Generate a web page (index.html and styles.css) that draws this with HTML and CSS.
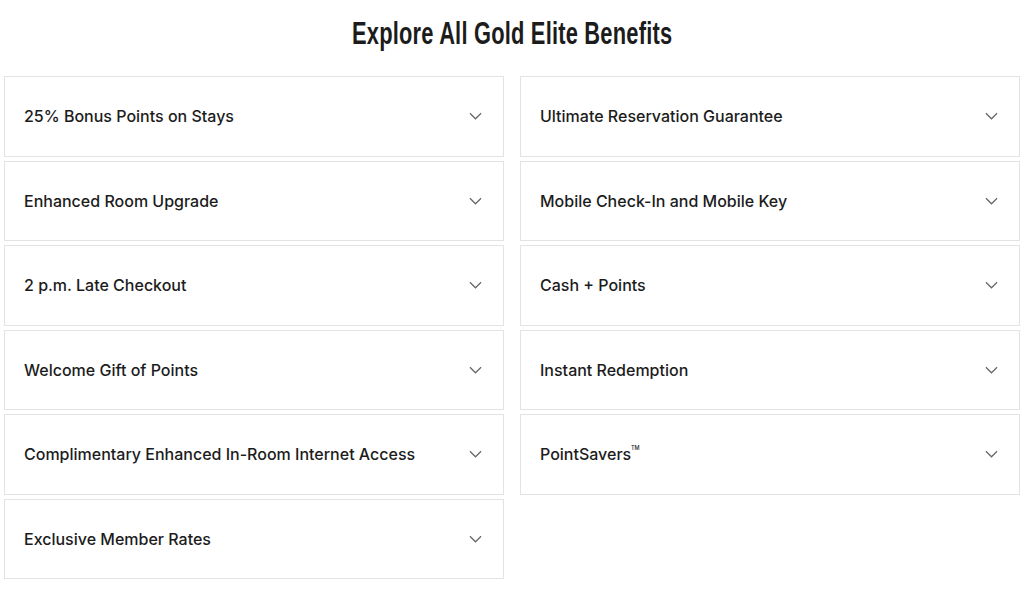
FILE: index.html
```html
<!DOCTYPE html>
<html lang="en">

<head>
    <meta charset="UTF-8">
    <meta name="viewport" content="width=device-width, initial-scale=1.0">
    <title>Gold Elite Benefits</title>
    <link rel="stylesheet" href="styles.css">
</head>

<body>
    <h1 class="title"><span>Explore All Gold Elite Benefits</span></h1>

    <div class="benefits">
        <div class="column">
            <div class="benefit"><span>25% Bonus Points on Stays</span><svg class="chevron" viewBox="0 0 14 8"><path d="M1 1l6 6 6-6"/></svg></div>
            <div class="benefit"><span>Enhanced Room Upgrade</span><svg class="chevron" viewBox="0 0 14 8"><path d="M1 1l6 6 6-6"/></svg></div>
            <div class="benefit"><span>2 p.m. Late Checkout</span><svg class="chevron" viewBox="0 0 14 8"><path d="M1 1l6 6 6-6"/></svg></div>
            <div class="benefit"><span>Welcome Gift of Points</span><svg class="chevron" viewBox="0 0 14 8"><path d="M1 1l6 6 6-6"/></svg></div>
            <div class="benefit"><span>Complimentary Enhanced In-Room Internet Access</span><svg class="chevron" viewBox="0 0 14 8"><path d="M1 1l6 6 6-6"/></svg></div>
            <div class="benefit"><span>Exclusive Member Rates</span><svg class="chevron" viewBox="0 0 14 8"><path d="M1 1l6 6 6-6"/></svg></div>
        </div>
        <div class="column">
            <div class="benefit"><span>Ultimate Reservation Guarantee</span><svg class="chevron" viewBox="0 0 14 8"><path d="M1 1l6 6 6-6"/></svg></div>
            <div class="benefit"><span>Mobile Check-In and Mobile Key</span><svg class="chevron" viewBox="0 0 14 8"><path d="M1 1l6 6 6-6"/></svg></div>
            <div class="benefit"><span>Cash + Points</span><svg class="chevron" viewBox="0 0 14 8"><path d="M1 1l6 6 6-6"/></svg></div>
            <div class="benefit"><span>Instant Redemption</span><svg class="chevron" viewBox="0 0 14 8"><path d="M1 1l6 6 6-6"/></svg></div>
            <div class="benefit"><span>PointSavers<span class="tm">TM</span></span><svg class="chevron" viewBox="0 0 14 8"><path d="M1 1l6 6 6-6"/></svg></div>
        </div>
    </div>
</body>

</html>
```

FILE: styles.css
```css
body {
    margin: 0;
    padding: 0 4px;
    background: #fff;
    color: #1c1c1c;
    font-family: Inter, "Open Sans", "Liberation Sans", sans-serif;
}

.title {
    margin: 0;
    padding-top: 16px;
    height: 76px;
    box-sizing: border-box;
    text-align: center;
    font-family: "Liberation Sans", Arial, sans-serif;
    font-weight: 700;
    font-size: 31px;
    line-height: 36px;
    color: #1c1c1c;
}

.title span {
    display: inline-block;
    transform: scaleX(0.705);
    letter-spacing: 0.3px;
}

.benefits {
    display: grid;
    grid-template-columns: 500px 500px;
    column-gap: 16px;
    align-items: start;
}

.column {
    display: flex;
    flex-direction: column;
    gap: 4px;
}

.benefit {
    display: flex;
    align-items: center;
    justify-content: space-between;
    height: 80.5px;
    box-sizing: border-box;
    padding: 0 21px 0 19px;
    border: 1px solid #e3e3e3;
    font-size: 16px;
    font-weight: 500;
}

.tm {
    display: inline-block;
    width: 8px;
    font-size: 10px;
    font-weight: 500;
    vertical-align: top;
    line-height: 10px;
    transform: scale(0.55);
    transform-origin: left top;
    margin-top: 1px;
}

.chevron {
    width: 13px;
    height: 8px;
    fill: none;
    stroke: #666;
    stroke-width: 1.3;
}
```
